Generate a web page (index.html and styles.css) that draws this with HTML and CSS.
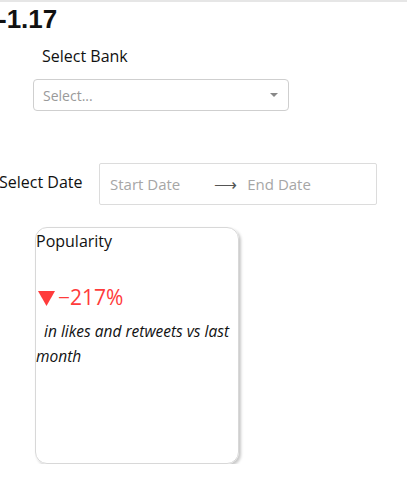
FILE: index.html
```html
<!DOCTYPE html>
<html>
<head>
<meta charset="utf-8">
<link rel="stylesheet" href="styles.css">
</head>
<body>
<div class="page">
  <div class="value">-1.17</div>
  <div class="bank">
    <div class="bank-label">Select Bank</div>
    <div class="select">
      <span class="placeholder">Select...</span>
      <span class="caret"></span>
    </div>
  </div>
  <div class="date-row">
    <div class="date-label">Select Date</div>
    <div class="range">
      <span class="ph">Start Date</span>
      <span class="arrow">&#10230;</span>
      <span class="ph">End Date</span>
    </div>
  </div>
  <div class="card">
    <div class="card-title">Popularity</div>
    <div class="delta"><svg class="tri" width="17" height="15" viewBox="0 0 17 15"><polygon points="0,0 17,0 8.5,15" fill="#ff3b3b"/></svg><span>&#8722;217%</span></div>
    <div class="desc">&nbsp; in likes and retweets vs last month</div>
  </div>
</div>
</body>
</html>
```

FILE: styles.css
```css
html, body {
  margin: 0;
  padding: 0;
  background: #fff;
}
body {
  font-family: "Open Sans", "Noto Sans", sans-serif;
  color: #111;
  border-top: 2px solid #e6e6e6;
}
.page {
  display: flex;
  flex-direction: column;
  align-items: flex-start;
}
.value {
  font-family: "Liberation Sans", Arial, sans-serif;
  font-weight: bold;
  font-size: 26px;
  line-height: 30px;
  margin-top: 2px;
  margin-left: -2px;
  color: #111;
}
.bank {
  display: flex;
  flex-direction: column;
  margin-left: 33px;
  margin-top: 11px;
}
.bank-label {
  font-size: 16px;
  line-height: 22px;
  margin-left: 9px;
  color: #111;
}
.select {
  margin-top: 12px;
  box-sizing: border-box;
  width: 256px;
  height: 32px;
  border: 1px solid #cfcfcf;
  border-radius: 4px;
  display: flex;
  align-items: center;
  justify-content: space-between;
  padding: 0 10px 0 9px;
}
.placeholder {
  font-size: 14px;
  color: #9a9a9a;
}
.caret {
  width: 0;
  height: 0;
  border-left: 4px solid transparent;
  border-right: 4px solid transparent;
  border-top: 4px solid #888;
}
.date-row {
  display: flex;
  align-items: center;
  margin-top: 52px;
}
.date-label {
  font-size: 16px;
  width: 99px;
  margin-left: -1px;
  margin-right: 1px;
  color: #111;
  position: relative;
  top: -2px;
}
.range {
  box-sizing: border-box;
  width: 278px;
  height: 42px;
  border: 1px solid #dcdcdc;
  border-radius: 2px;
  display: flex;
  align-items: center;
  padding-left: 10px;
}
.ph {
  font-size: 15px;
  color: #a6a6a6;
}
.arrow {
  font-size: 16px;
  color: #555;
  margin: 0 10px 0 34px;
}
.card {
  margin-top: 22px;
  margin-left: 35px;
  box-sizing: border-box;
  width: 204px;
  height: 237px;
  border: 1px solid #d8d8d8;
  border-radius: 12px;
  box-shadow: 2px 2px 3px rgba(0, 0, 0, 0.22);
  display: flex;
  flex-direction: column;
}
.card-title {
  font-size: 16px;
  line-height: 22px;
  margin-top: 2px;
  color: #111;
}
.delta {
  display: flex;
  align-items: center;
  font-size: 21px;
  line-height: 26px;
  color: #ff3b3b;
  margin-top: 32px;
  margin-left: 2px;
}
.tri {
  margin-right: 3px;
  margin-top: 2px;
}
.desc {
  font-size: 15.5px;
  font-style: italic;
  line-height: 25px;
  margin-top: 9px;
  color: #111;
}
```
